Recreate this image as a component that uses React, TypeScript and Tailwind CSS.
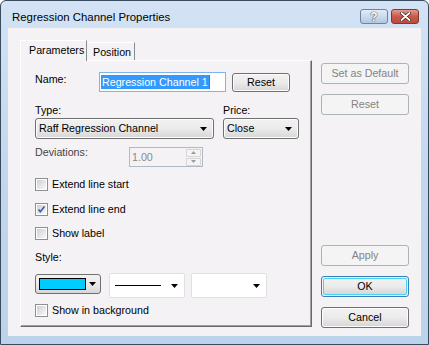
import React from 'react'

const font = { fontFamily: '"Liberation Sans", Arial, sans-serif' }

function Arrow({ className = '' }: { className?: string }) {
  return (
    <svg width="7" height="4" viewBox="0 0 7 4" className={className}>
      <path d="M0 0h7L3.5 4z" fill="#000" />
    </svg>
  )
}

function WinButton({
  label,
  disabled,
  primary,
  className = '',
}: {
  label: string
  disabled?: boolean
  primary?: boolean
  className?: string
}) {
  if (disabled) {
    return (
      <div
        className={`flex items-center justify-center rounded-[3px] border border-[#adb2b5] bg-[#f4f4f4] text-[10.7px] text-[#838383] ${className}`}
      >
        {label}
      </div>
    )
  }
  if (primary) {
    return (
      <div className={`rounded-[3px] border border-[#3c7fb1] p-px ${className}`}>
        <div className="flex h-full items-center justify-center rounded-[2px] border border-[#48d2fe] bg-gradient-to-b from-[#f2f2f2] via-[#ebebeb] to-[#d6d6d6] text-[10.7px] text-black">
          {label}
        </div>
      </div>
    )
  }
  return (
    <div
      className={`flex items-center justify-center rounded-[3px] border border-[#707070] bg-gradient-to-b from-[#f2f2f2] via-[#ebebeb] to-[#d6d6d6] text-[10.7px] text-black shadow-[inset_0_0_0_1px_#fcfcfc] ${className}`}
    >
      {label}
    </div>
  )
}

function Checkbox({ checked, label }: { checked?: boolean; label: string }) {
  return (
    <div className="flex h-[13px] items-center">
      <div className="ml-[14px] flex h-[13px] w-[13px] items-center justify-center border border-[#8f8f8f] bg-white p-px">
        <div className="relative h-full w-full bg-gradient-to-br from-[#cfd1d4] to-[#f8f8f8]">
          {checked && (
            <svg width="9" height="9" viewBox="0 0 9 9" className="absolute left-0 top-0">
              <path d="M1.5 4.5l1.8 2.3 4.2-5.3" stroke="#3c5aa6" strokeWidth="1.6" fill="none" />
            </svg>
          )}
        </div>
      </div>
      <span className="ml-[4px] text-[10.7px] leading-[13px] text-black">{label}</span>
    </div>
  )
}

function DropButton({ label, className = '' }: { label: string; className?: string }) {
  return (
    <div
      className={`flex items-center justify-between rounded-[3px] border border-[#707070] bg-gradient-to-b from-[#f2f2f2] via-[#ebebeb] to-[#d6d6d6] pl-[3px] pr-[6px] text-[10.7px] text-black shadow-[inset_0_0_0_1px_#fcfcfc] ${className}`}
    >
      <span>{label}</span>
      <Arrow />
    </div>
  )
}

function LineSelect({ line }: { line?: boolean }) {
  return (
    <div className="flex h-[25px] w-[76px] items-center justify-between rounded-[2px] border border-[#e0e0e0] bg-white pl-[5px] pr-[6px]">
      {line ? <div className="h-px w-[46px] bg-black" /> : <div />}
      <Arrow />
    </div>
  )
}

function TabPanel() {
  return (
    <div className="relative h-[267px] border-l border-t border-white border-b-[#696969] border-r-[#696969] border-b border-r">
      <div className="h-full border-b border-r border-[#a0a0a0] pt-[11px]">
        {/* name */}
        <div className="flex h-[20px] items-start">
          <span className="ml-[14px] mt-px w-[64px] text-[10.7px] leading-[13px]">Name:</span>
          <div className="flex h-[20px] w-[127px] items-center border border-[#7eb4ea] bg-white pl-px">
            <span className="bg-[#3399ff] px-px text-[10.7px] leading-[14px] text-white">Regression Channel 1</span>
            <span className="h-[14px] w-px bg-[#c06000]" />
          </div>
          <WinButton label="Reset" className="ml-[6px] mt-px h-[19px] w-[58px]" />
        </div>
        {/* type / price labels */}
        <div className="mt-[12px] flex h-[14px] items-start text-[10.7px] leading-[13px]">
          <span className="ml-[14px] w-[188px]">Type:</span>
          <span>Price:</span>
        </div>
        <div className="flex h-[21px]">
          <DropButton label="Raff Regression Channel" className="ml-[14px] h-[21px] w-[179px]" />
          <DropButton label="Close" className="ml-[9px] h-[21px] w-[76px]" />
        </div>
        {/* deviations */}
        <div className="mt-[8px] flex h-[20px] items-start">
          <span className="ml-[14px] -mt-px w-[94px] text-[10.7px] leading-[13px] text-[#444]">Deviations:</span>
          <div className="flex h-[20px] w-[74px] items-center justify-between border border-[#afbac5] pl-[2px] pr-px">
            <span className="text-[10.7px] text-[#8a8a8a]">1.00</span>
            <div className="flex flex-col gap-px">
              <div className="flex h-[8px] w-[15px] items-center justify-center rounded-[1px] border border-[#d5d5d5] bg-[#f4f4f4]">
                <svg width="5" height="3" viewBox="0 0 5 3"><path d="M0 3h5L2.5 0z" fill="#9a9a9a" /></svg>
              </div>
              <div className="flex h-[8px] w-[15px] items-center justify-center rounded-[1px] border border-[#d5d5d5] bg-[#f4f4f4]">
                <svg width="5" height="3" viewBox="0 0 5 3"><path d="M0 0h5L2.5 3z" fill="#9a9a9a" /></svg>
              </div>
            </div>
          </div>
        </div>
        <div className="mt-[11px]">
          <Checkbox label="Extend line start" />
        </div>
        <div className="mt-[12px]">
          <Checkbox checked label="Extend line end" />
        </div>
        <div className="mt-[11px]">
          <Checkbox label="Show label" />
        </div>
        <div className="mt-[11px] h-[14px] pl-[14px] text-[10.7px] leading-[13px]">Style:</div>
        {/* style row */}
        <div className="mt-[8px] flex h-[25px] items-start">
          <div className="ml-[14px] mt-px flex h-[20px] w-[66px] items-center justify-between rounded-[3px] border border-[#707070] bg-gradient-to-b from-[#f2f2f2] via-[#ebebeb] to-[#d6d6d6] pl-[3px] pr-[4px]">
            <div className="h-[12px] w-[47px] border border-black bg-[#00ccff]" />
            <Arrow />
          </div>
          <div className="ml-[8px]">
            <LineSelect line />
          </div>
          <div className="ml-[6px]">
            <LineSelect />
          </div>
        </div>
        <div className="mt-[6px]">
          <Checkbox label="Show in background" />
        </div>
      </div>
    </div>
  )
}

export default function App() {
  return (
    <div
      style={font}
      className="flex h-[345px] w-[429px] flex-col overflow-hidden rounded-t-[6px] border border-[#3a4b5e] bg-gradient-to-b from-[#d3e3f5] via-[#c2d7ee] to-[#bcd3ec]"
    >
      {/* title bar */}
      <div className="flex h-[27px] shrink-0 items-start pl-[11px] pr-[9px]">
        <span className="mt-[9px] text-[11.4px] leading-[14px] text-black">Regression Channel Properties</span>
        <div className="ml-auto mt-[8px] flex gap-[3px]">
          <div className="flex h-[15px] w-[28px] items-center justify-center rounded-[3px] border border-[#6d83a0] bg-gradient-to-b from-[#e3ecf7] to-[#b3c8e1]">
            <span className="text-[12px] font-bold leading-none text-white [text-shadow:0_0_1px_#233,0_0_1px_#233]">?</span>
          </div>
          <div className="flex h-[15px] w-[28px] items-center justify-center rounded-[3px] border border-[#7d3a32] bg-gradient-to-b from-[#e19a8e] via-[#c9594b] to-[#c04a3c]">
            <svg width="11" height="9" viewBox="0 0 11 9">
              <path d="M1.5 1l8 7M9.5 1l-8 7" stroke="#3a1a16" strokeWidth="3.2" strokeLinecap="round" />
              <path d="M1.5 1l8 7M9.5 1l-8 7" stroke="#fff" strokeWidth="1.8" strokeLinecap="round" />
            </svg>
          </div>
        </div>
      </div>
      {/* client area */}
      <div className="mx-[7px] mb-[8px] flex h-[308px] bg-[#f4f2f5] pl-[12px] pt-[12px]">
        <div className="w-[292px]">
          <div className="flex h-[20px] items-end text-[10.7px]">
            <div className="relative z-10 -mb-px h-[21px] w-[67px] border-l border-t border-r border-white border-r-[#8a8a8a] bg-[#f4f2f5] pl-[8px] pt-[3px] leading-[13px]">
              Parameters
            </div>
            <div className="h-[18px] w-[48px] border-r border-t border-white border-r-[#8a8a8a] pl-[6px] pt-[3px] leading-[13px]">
              Position
            </div>
          </div>
          <TabPanel />
        </div>
        <div className="ml-[9px] flex w-[88px] flex-col pt-[23px] pb-[8px]">
          <WinButton disabled label="Set as Default" className="h-[21px]" />
          <WinButton disabled label="Reset" className="mt-[10px] h-[21px]" />
          <WinButton disabled label="Apply" className="mt-auto h-[21px]" />
          <WinButton primary label="OK" className="mt-[10px] h-[21px]" />
          <WinButton label="Cancel" className="mt-[10px] h-[21px]" />
        </div>
      </div>
    </div>
  )
}
